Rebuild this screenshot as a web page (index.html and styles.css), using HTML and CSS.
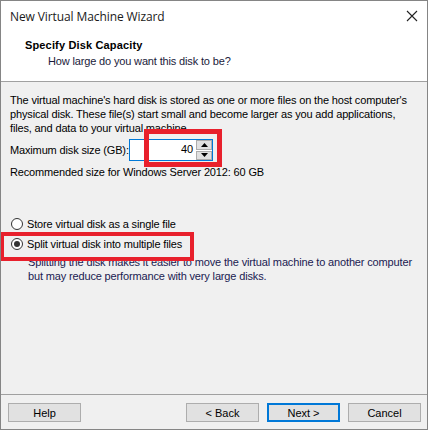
FILE: index.html
```html
<!DOCTYPE html>
<html>
<head>
<meta charset="utf-8">
<link rel="stylesheet" href="styles.css">
</head>
<body>
<div class="window">
  <div class="titlebar">
    <span class="title">New Virtual Machine Wizard</span>
    <svg class="close" width="12" height="12" viewBox="0 0 12 12"><path d="M1 1 L11 11 M11 1 L1 11" stroke="#222" stroke-width="1.1" fill="none"/></svg>
  </div>
  <div class="header">
    <div class="h-title">Specify Disk Capacity</div>
    <div class="h-sub">How large do you want this disk to be?</div>
  </div>
  <div class="content">
    <p class="intro">The virtual machine's hard disk is stored as one or more files on the host computer's physical disk. These file(s) start small and become larger as you add applications, files, and data to your virtual machine.</p>
    <div class="size-row">
      <span class="size-label">Maximum disk size (GB):</span>
      <div class="spin">
        <div class="spin-input">40</div>
        <div class="spin-btns">
          <div class="spin-btn"><svg width="7" height="4" viewBox="0 0 7 4"><path d="M0 4 L3.5 0 L7 4 Z" fill="#000"/></svg></div>
          <div class="spin-btn"><svg width="7" height="4" viewBox="0 0 7 4"><path d="M0 0 L3.5 4 L7 0 Z" fill="#000"/></svg></div>
        </div>
      </div>
    </div>
    <p class="rec">Recommended size for Windows Server 2012: 60 GB</p>
    <div class="radios">
      <div class="radio"><span class="circle"></span><span>Store virtual disk as a single file</span></div>
      <div class="radio checked"><span class="circle"></span><span>Split virtual disk into multiple files</span></div>
      <p class="desc">Splitting the disk makes it easier to move the virtual machine to another computer but may reduce performance with very large disks.</p>
    </div>
  </div>
  <div class="footer">
    <button class="btn">Help</button>
    <div class="spacer"></div>
    <button class="btn">&lt; Back</button>
    <button class="btn default">Next &gt;</button>
    <button class="btn">Cancel</button>
  </div>
  <div class="mark mark-size"></div>
  <div class="mark mark-split"></div>
</div>
</body>
</html>
```

FILE: styles.css
```css
html, body {
  margin: 0;
  padding: 0;
  background: #f0f0f0;
}
.window {
  position: relative;
  width: 428px;
  height: 430px;
  box-sizing: border-box;
  border: 1px solid #858585;
  background: #f0f0f0;
  display: flex;
  flex-direction: column;
  font-family: "Liberation Sans", Arial, sans-serif;
  font-size: 11px;
  letter-spacing: -0.15px;
  color: #000;
  overflow: hidden;
}
.titlebar {
  height: 29px;
  background: #fff;
  display: flex;
  align-items: center;
  justify-content: space-between;
  padding: 0 9px 0 9px;
}
.title {
  font-family: "Open Sans", "Noto Sans", sans-serif;
  font-size: 12px;
  letter-spacing: -0.1px;
  color: #1a1a1a;
  padding-top: 1px;
}
.header {
  height: 52px;
  background: #fff;
  border-bottom: 1px solid #a0a0a0;
  padding: 8px 0 0 24px;
  box-sizing: border-box;
}
.h-title {
  font-weight: bold;
  line-height: 14px;
  height: 15px;
  letter-spacing: 0.15px;
}
.h-sub {
  padding-left: 23px;
  line-height: 14px;
  margin-top: 1px;
  color: #1a1a3a;
}
.content {
  flex: 1;
  padding: 11px 0 0 9px;
}
.intro {
  margin: 0;
  line-height: 14px;
  width: 403px;
}
.size-row {
  display: flex;
  align-items: center;
  margin-top: 4px;
  height: 22px;
}
.size-label {
  width: 119px;
  white-space: nowrap;
}
.spin {
  display: flex;
  height: 22px;
  width: 84px;
  box-sizing: border-box;
  border: 1px solid #0078d7;
  background: #fff;
}
.spin-input {
  flex: 1;
  text-align: right;
  line-height: 19px;
  padding-right: 3px;
}
.spin-btns {
  display: flex;
  flex-direction: column;
  gap: 1px;
  width: 16px;
}
.spin-btn {
  flex: 1;
  background: #e1e1e1;
  border: 1px solid #adadad;
  display: flex;
  align-items: center;
  justify-content: center;
}
.rec {
  margin: 4px 0 0 0;
  line-height: 14px;
}
.radios {
  margin-top: 35px;
}
.radio {
  display: flex;
  align-items: center;
  height: 20px;
  margin-left: 1px;
}
.circle {
  width: 12px;
  height: 12px;
  box-sizing: border-box;
  border: 1px solid #333;
  border-radius: 50%;
  background: #fff;
  margin-right: 4px;
  display: flex;
  align-items: center;
  justify-content: center;
}
.radio.checked .circle::after {
  content: "";
  width: 6px;
  height: 6px;
  border-radius: 50%;
  background: #333;
}
.desc {
  margin: 1px 0 0 0;
  padding-left: 18px;
  line-height: 14px;
  width: 400px;
  color: #1a2050;
}
.footer {
  height: 35px;
  border-top: 1px solid #a0a0a0;
  display: flex;
  align-items: flex-start;
  padding: 8px 6px 0 7px;
  gap: 8px;
  box-sizing: border-box;
}
.spacer {
  flex: 1;
}
.btn {
  width: 73px;
  height: 19px;
  box-sizing: border-box;
  background: #e1e1e1;
  border: 1px solid #adadad;
  font-family: "Liberation Sans", Arial, sans-serif;
  font-size: 11px;
  color: #000;
  padding: 0;
  margin: 0;
}
.btn.default {
  border: 2px solid #0078d7;
}
.mark {
  position: absolute;
  border-style: solid;
  border-color: #e8202c;
  box-sizing: border-box;
}
.mark-size {
  left: 143px;
  top: 128px;
  width: 78px;
  height: 38px;
  border-width: 5px;
}
.mark-split {
  left: -1px;
  top: 231px;
  width: 194px;
  height: 29px;
  border-width: 4px;
}
```
